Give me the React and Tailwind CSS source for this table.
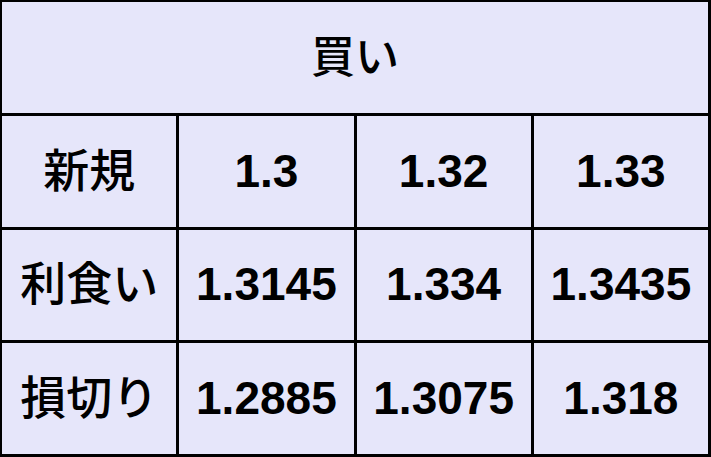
export default function App() {
  const rows = [
    ["新規", "1.3", "1.32", "1.33"],
    ["利食い", "1.3145", "1.334", "1.3435"],
    ["損切り", "1.2885", "1.3075", "1.318"],
  ];

  return (
    <div
      className="w-[711px] h-[457px] grid grid-cols-4 grid-rows-4 gap-[3px] bg-black pt-[2px] pl-[2px] pr-[3px] pb-[3px] text-black font-bold text-[46px]"
      style={{ fontFamily: '"Liberation Sans", Arial, "Noto Sans CJK JP", sans-serif' }}
    >
      {/* Header */}
      <div className="col-span-4 bg-[#e6e6fa] flex items-center justify-center text-[44px] font-medium pt-[2px]">
        買い
      </div>

      {rows.map((row, i) =>
        row.map((cell, j) => (
          <div
            key={i + "-" + j}
            className={`bg-[#e6e6fa] flex items-center justify-center whitespace-nowrap ${
              j === 0 ? "font-medium" : ""
            }`}
          >
            {cell}
          </div>
        ))
      )}
    </div>
  );
}
